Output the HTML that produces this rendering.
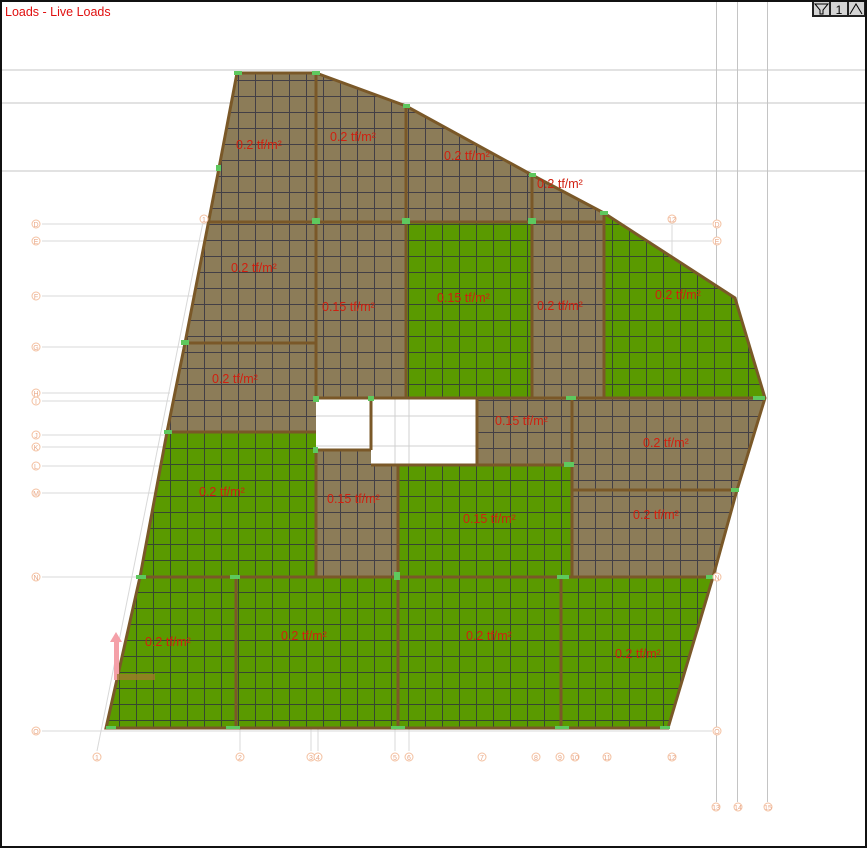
<!DOCTYPE html>
<html><head><meta charset="utf-8"><style>
html,body{margin:0;padding:0;background:#fff}
.wrap{position:relative;width:867px;height:848px;overflow:hidden}
svg{position:absolute;left:0;top:0}
text{font-family:"Liberation Sans",sans-serif}
</style></head><body><div class="wrap">
<svg width="867" height="848" viewBox="0 0 867 848">
<defs>
<pattern id="mesh" width="17" height="16" patternUnits="userSpaceOnUse">
<path d="M0 0.5H17M0.5 0V16" stroke="#2a2a40" stroke-width="1" fill="none" opacity="0.75"/>
</pattern>
<clipPath id="slab"><polygon points="237,73 316,73 406,106 532,175 604,213 735,298 765,398 737,490 713,577 668,728 106,728 140,577 167,432 185,343 219,168"/></clipPath>
</defs>
<rect x="0" y="0" width="867" height="848" fill="#fff"/>
<g stroke="#c4c4c4" stroke-width="1">
<line x1="0" y1="70" x2="867" y2="70"/><line x1="0" y1="103" x2="867" y2="103"/><line x1="0" y1="171" x2="867" y2="171"/>
<line x1="716.5" y1="0" x2="716.5" y2="802"/><line x1="737.5" y1="0" x2="737.5" y2="802"/><line x1="767.5" y1="0" x2="767.5" y2="802"/>
</g>
<g stroke="#d8d8d8" stroke-width="1">
<line x1="42" y1="224" x2="212" y2="224"/><line x1="42" y1="241" x2="210" y2="241"/><line x1="42" y1="296" x2="200" y2="296"/><line x1="42" y1="347" x2="185" y2="347"/>
<line x1="42" y1="393" x2="170" y2="393"/><line x1="42" y1="401" x2="170" y2="401"/><line x1="42" y1="435" x2="166" y2="435"/><line x1="42" y1="447" x2="164" y2="447"/>
<line x1="42" y1="466" x2="160" y2="466"/><line x1="42" y1="493" x2="155" y2="493"/><line x1="42" y1="577" x2="140" y2="577"/><line x1="42" y1="731" x2="712" y2="731"/>
<line x1="610" y1="224" x2="712" y2="224"/><line x1="640" y1="241" x2="712" y2="241"/>
<line x1="97" y1="751" x2="203" y2="222"/>
<line x1="240" y1="728" x2="240" y2="751"/><line x1="311" y1="728" x2="311" y2="751"/><line x1="318" y1="728" x2="318" y2="751"/><line x1="395" y1="728" x2="395" y2="751"/><line x1="409" y1="728" x2="409" y2="751"/>
<line x1="672" y1="225" x2="672" y2="300"/>
</g>
<g stroke="none">
<polygon fill="#5a9a00" points="237,73 316,73 406,106 532,175 604,213 735,298 765,398 737,490 713,577 668,728 106,728 140,577 167,432 185,343 219,168"/>
<polygon fill="#8c7c58" points="237,73 316,73 406,106 532,175 604,213 604,222 210,222 219,168"/>
<polygon fill="#8c7c58" points="210,222 316,222 316,432 167,432 185,343"/>
<rect fill="#8c7c58" x="316" y="222" width="90" height="176"/>
<rect fill="#8c7c58" x="532" y="222" width="72" height="176"/>
<rect fill="#8c7c58" x="316" y="450" width="82" height="127"/>
<rect fill="#8c7c58" x="477" y="398" width="97" height="66"/>
<polygon fill="#8c7c58" points="572,398 765,398 737,490 713,577 572,577"/>
<rect fill="url(#mesh)" x="0" y="0" width="867" height="848" clip-path="url(#slab)"/>
<polygon fill="#fff" points="316,398 477,398 477,465 371,465 371,450 316,450"/>
</g>
<g stroke="#d0d0d0" stroke-width="1">
<line x1="316" y1="416" x2="477" y2="416"/><line x1="316" y1="446" x2="477" y2="446"/>
<line x1="395" y1="398" x2="395" y2="465"/><line x1="409" y1="398" x2="409" y2="465"/>
</g>
<g stroke="#7a5828" stroke-width="3" fill="none">
<polygon points="237,73 316,73 406,106 532,175 604,213 735,298 765,398 737,490 713,577 668,728 106,728 140,577 167,432 185,343 219,168"/>
<line x1="316" y1="73" x2="316" y2="398"/><line x1="406" y1="106" x2="406" y2="398"/><line x1="532" y1="175" x2="532" y2="398"/><line x1="604" y1="213" x2="604" y2="398"/>
<line x1="210" y1="222" x2="604" y2="222"/><line x1="185" y1="343" x2="316" y2="343"/>
<line x1="316" y1="398" x2="765" y2="398"/><line x1="167" y1="432" x2="316" y2="432"/>
<line x1="371" y1="398" x2="371" y2="450"/><line x1="316" y1="450" x2="371" y2="450"/><line x1="371" y1="465" x2="574" y2="465"/>
<line x1="316" y1="450" x2="316" y2="577"/><line x1="398" y1="465" x2="398" y2="728"/><line x1="572" y1="398" x2="572" y2="577"/><line x1="477" y1="398" x2="477" y2="465"/>
<line x1="572" y1="490" x2="737" y2="490"/><line x1="140" y1="577" x2="713" y2="577"/>
<line x1="236" y1="577" x2="236" y2="728"/><line x1="561" y1="577" x2="561" y2="728"/>
</g>
<g fill="#5ec85e">
<rect x="234" y="71" width="8" height="4"/><rect x="312" y="71" width="8" height="4"/><rect x="403" y="104" width="7" height="4"/><rect x="529" y="173" width="7" height="4"/><rect x="600" y="211" width="8" height="4"/>
<rect x="216" y="165" width="5" height="6"/><rect x="312" y="218" width="8" height="6"/><rect x="402" y="218" width="8" height="6"/><rect x="528" y="218" width="8" height="6"/>
<rect x="181" y="340" width="8" height="5"/><rect x="313" y="396" width="6" height="6"/><rect x="368" y="396" width="6" height="5"/><rect x="566" y="396" width="10" height="4"/><rect x="753" y="396" width="12" height="4"/>
<rect x="164" y="430" width="8" height="4"/><rect x="313" y="447" width="5" height="6"/><rect x="564" y="462" width="10" height="5"/><rect x="731" y="488" width="8" height="4"/>
<rect x="136" y="575" width="10" height="4"/><rect x="230" y="575" width="10" height="4"/><rect x="394" y="572" width="6" height="8"/><rect x="557" y="575" width="12" height="4"/><rect x="706" y="575" width="10" height="4"/>
<rect x="106" y="726" width="10" height="3"/><rect x="226" y="726" width="14" height="3"/><rect x="391" y="726" width="14" height="3"/><rect x="555" y="726" width="14" height="3"/><rect x="660" y="726" width="10" height="3"/>
</g>
<rect x="114" y="640" width="5" height="40" fill="#f4a0a8"/><polygon points="110,642 116,632 122,642" fill="#f4a0a8"/>
<rect x="117" y="674" width="38" height="6" fill="#9c7a2a" opacity="0.8"/>
<g fill="#d02010" font-size="12.5">
<text x="236" y="149">0.2 tf/m²</text><text x="330" y="141">0.2 tf/m²</text><text x="444" y="160">0.2 tf/m²</text><text x="537" y="188">0.2 tf/m²</text>
<text x="231" y="272">0.2 tf/m²</text><text x="322" y="311">0.15 tf/m²</text><text x="437" y="302">0.15 tf/m²</text><text x="537" y="310">0.2 tf/m²</text><text x="655" y="299">0.2 tf/m²</text>
<text x="212" y="383">0.2 tf/m²</text><text x="495" y="425">0.15 tf/m²</text><text x="643" y="447">0.2 tf/m²</text>
<text x="199" y="496">0.2 tf/m²</text><text x="327" y="503">0.15 tf/m²</text><text x="463" y="523">0.15 tf/m²</text><text x="633" y="519">0.2 tf/m²</text>
<text x="145" y="646">0.2 tf/m²</text><text x="281" y="640">0.2 tf/m²</text><text x="466" y="640">0.2 tf/m²</text><text x="615" y="658">0.2 tf/m²</text>
</g>
<g fill="#fff" stroke="#f4c0a0" stroke-width="1">
<circle cx="36" cy="224" r="4"/><circle cx="36" cy="241" r="4"/><circle cx="36" cy="296" r="4"/><circle cx="36" cy="347" r="4"/><circle cx="36" cy="393" r="4"/><circle cx="36" cy="401" r="4"/><circle cx="36" cy="435" r="4"/><circle cx="36" cy="447" r="4"/><circle cx="36" cy="466" r="4"/><circle cx="36" cy="493" r="4"/><circle cx="36" cy="577" r="4"/><circle cx="36" cy="731" r="4"/>
<circle cx="717" cy="224" r="4"/><circle cx="717" cy="241" r="4"/><circle cx="717" cy="577" r="4"/><circle cx="717" cy="731" r="4"/><circle cx="204" cy="219" r="4"/><circle cx="672" cy="219" r="4"/>
<circle cx="97" cy="757" r="4"/><circle cx="240" cy="757" r="4"/><circle cx="311" cy="757" r="4"/><circle cx="318" cy="757" r="4"/><circle cx="395" cy="757" r="4"/><circle cx="409" cy="757" r="4"/><circle cx="482" cy="757" r="4"/><circle cx="536" cy="757" r="4"/><circle cx="560" cy="757" r="4"/><circle cx="575" cy="757" r="4"/><circle cx="607" cy="757" r="4"/><circle cx="672" cy="757" r="4"/>
<circle cx="716" cy="807" r="4"/><circle cx="738" cy="807" r="4"/><circle cx="768" cy="807" r="4"/>
</g>
<g fill="#e8a888" font-size="7" text-anchor="middle">
<text x="36" y="227">D</text><text x="36" y="244">E</text><text x="36" y="299">F</text><text x="36" y="350">G</text><text x="36" y="396">H</text><text x="36" y="404">I</text><text x="36" y="438">J</text><text x="36" y="450">K</text><text x="36" y="469">L</text><text x="36" y="496">M</text><text x="36" y="580">N</text><text x="36" y="734">O</text>
<text x="717" y="227">D</text><text x="717" y="244">E</text><text x="717" y="580">N</text><text x="717" y="734">O</text><text x="204" y="222">1</text><text x="672" y="222">12</text>
<text x="97" y="760">1</text><text x="240" y="760">2</text><text x="311" y="760">3</text><text x="318" y="760">4</text><text x="395" y="760">5</text><text x="409" y="760">6</text><text x="482" y="760">7</text><text x="536" y="760">8</text><text x="560" y="760">9</text><text x="575" y="760">10</text><text x="607" y="760">11</text><text x="672" y="760">12</text>
<text x="716" y="810">13</text><text x="738" y="810">14</text><text x="768" y="810">15</text>
</g>
<text x="5" y="16" fill="#e01010" font-size="12.5">Loads - Live Loads</text>
<g>
<rect x="812" y="1" width="53" height="16" fill="#222"/>
<rect x="814" y="2" width="15" height="13" fill="#d4d4d4"/><rect x="831" y="2" width="16" height="13" fill="#d4d4d4"/><rect x="849" y="2" width="15" height="13" fill="#d4d4d4"/>
<path d="M815 4H828L823 10V14H820V10Z" fill="none" stroke="#000" stroke-width="1"/>
<text x="839" y="14" font-size="12" text-anchor="middle" fill="#000">1</text>
<path d="M850 14L856 4L862 14" fill="none" stroke="#000" stroke-width="1"/>
</g>
<rect x="1" y="1" width="865" height="846" fill="none" stroke="#111" stroke-width="2"/>
</svg>
</div></body></html>
